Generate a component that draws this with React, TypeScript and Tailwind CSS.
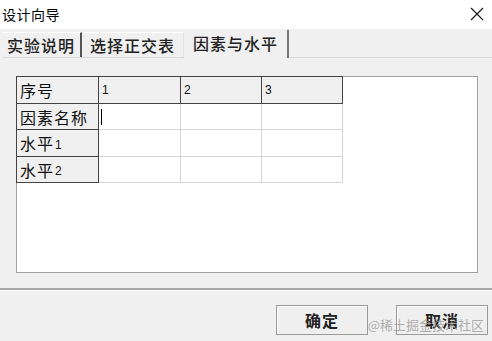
import React from "react";

const CJK = { fontFamily: '"Noto Sans CJK SC", "Noto Sans", sans-serif' };
const LAT = { fontFamily: '"Liberation Sans", Arial, sans-serif' };

function HeadCell({ children, w, h, num }: { children?: React.ReactNode; w: string; h: string; num?: boolean }) {
  return (
    <div
      className={`${w} ${h} bg-[#f0f0f0] border-r border-b border-[#444444] flex items-center pl-[3px] text-[#111] ${num ? "text-[12px]" : "text-[16px] tracking-[1px]"}`}
      style={num ? LAT : CJK}
    >
      {children}
    </div>
  );
}

function DataCell({ w, h, cursor }: { w: string; h: string; cursor?: boolean }) {
  return (
    <div className={`${w} ${h} bg-white border-r border-b border-[#d4d4d4] flex items-center pl-[2px]`}>
      {cursor ? <div className="w-px h-[16px] bg-black" /> : null}
    </div>
  );
}

export default function App() {
  const rows = ["h-[27px]", "h-[26px]", "h-[27px]", "h-[26px]"];
  const cols = ["w-[82px]", "w-[82px]", "w-[81px]", "w-[81px]"];
  return (
    <div className="w-[492px] h-[341px] bg-[#f0f0f0] relative overflow-hidden flex flex-col" style={CJK}>
      {/* title bar */}
      <div className="h-[29px] bg-white flex items-center justify-between pl-[2px] pr-[8px] shrink-0">
        <span className="text-[14px] tracking-[0.5px] text-black leading-none -mt-[2px]">设计向导</span>
        <svg width="14" height="14" viewBox="0 0 14 14" className="-mt-[2px]">
          <path d="M1 1 L13 13 M13 1 L1 13" stroke="#111" strokeWidth="1.1" />
        </svg>
      </div>
      {/* tabs */}
      <div className="h-[29px] flex items-end shrink-0 pl-[2px]">
        <div className="flex items-stretch h-[26px] border-b border-[#d9d9d9]">
          <div className="w-[80px] flex items-center justify-center text-[16px] tracking-[1px] text-[#222] font-medium border-t border-white border-r-2 border-r-[#555]">
            实验说明
          </div>
          <div className="w-[102px] flex items-center justify-center text-[16px] tracking-[1px] text-[#222] font-medium border-t border-white border-r border-r-[#e2e2e2]">
            选择正交表
          </div>
        </div>
        <div className="w-[105px] h-[28px] flex items-center justify-center text-[16px] tracking-[1px] text-[#222] font-medium border-r-2 border-[#777] pb-[2px]">
          因素与水平
        </div>
        <div className="flex-1 h-[2px] border-b border-[#d9d9d9]" />
      </div>
      {/* content */}
      <div className="flex-1 pl-[16px] pr-[14px] pt-[18px]">
        <div className="w-[462px] h-[197px] bg-white border border-[#a0a0a0]">
          <div className="-mt-px -ml-px w-fit border-t border-l border-[#444444] flex flex-col">
            <div className="flex">
              <HeadCell w={cols[0]} h={rows[0]}>序号</HeadCell>
              <HeadCell w={cols[1]} h={rows[0]} num>1</HeadCell>
              <HeadCell w={cols[2]} h={rows[0]} num>2</HeadCell>
              <HeadCell w={cols[3]} h={rows[0]} num>3</HeadCell>
            </div>
            {[
              ["因素名称", true],
              ["水平", false, "1"],
              ["水平", false, "2"],
            ].map((r, i) => (
              <div className="flex" key={i}>
                <HeadCell w={cols[0]} h={rows[i + 1]}>
                  {r[0] as string}
                  {r[2] ? <span className="text-[12px] ml-[1px] mt-[3px]" style={LAT}>{r[2] as string}</span> : null}
                </HeadCell>
                <DataCell w={cols[1]} h={rows[i + 1]} cursor={r[1] as boolean} />
                <DataCell w={cols[2]} h={rows[i + 1]} />
                <DataCell w={cols[3]} h={rows[i + 1]} />
              </div>
            ))}
          </div>
        </div>
      </div>
      {/* separator */}
      <div className="h-[3px] shrink-0 border-t-2 border-[#a8a8a8] border-b border-b-[#f8f8f8]" />
      {/* buttons */}
      <div className="h-[50px] shrink-0 flex items-start justify-end gap-[28px] pt-[14px] pr-[4px]">
        <button className="w-[92px] h-[30px] bg-[#efefef] border border-[#9a9a9a] shadow-[inset_1px_1px_0_#ffffff] text-[16px] font-bold text-[#222] tracking-[1px]" style={CJK}>
          确定
        </button>
        <button className="w-[92px] h-[30px] bg-[#efefef] border border-[#9a9a9a] shadow-[inset_1px_1px_0_#ffffff] text-[16px] font-bold text-[#222] tracking-[1px]" style={CJK}>
          取消
        </button>
      </div>
      {/* watermark */}
      <div className="absolute right-[8px] bottom-[10px] text-[13px] text-[#9a9a9a]/80 leading-none" style={CJK}>
        @稀土掘金技术社区
      </div>
    </div>
  );
}
